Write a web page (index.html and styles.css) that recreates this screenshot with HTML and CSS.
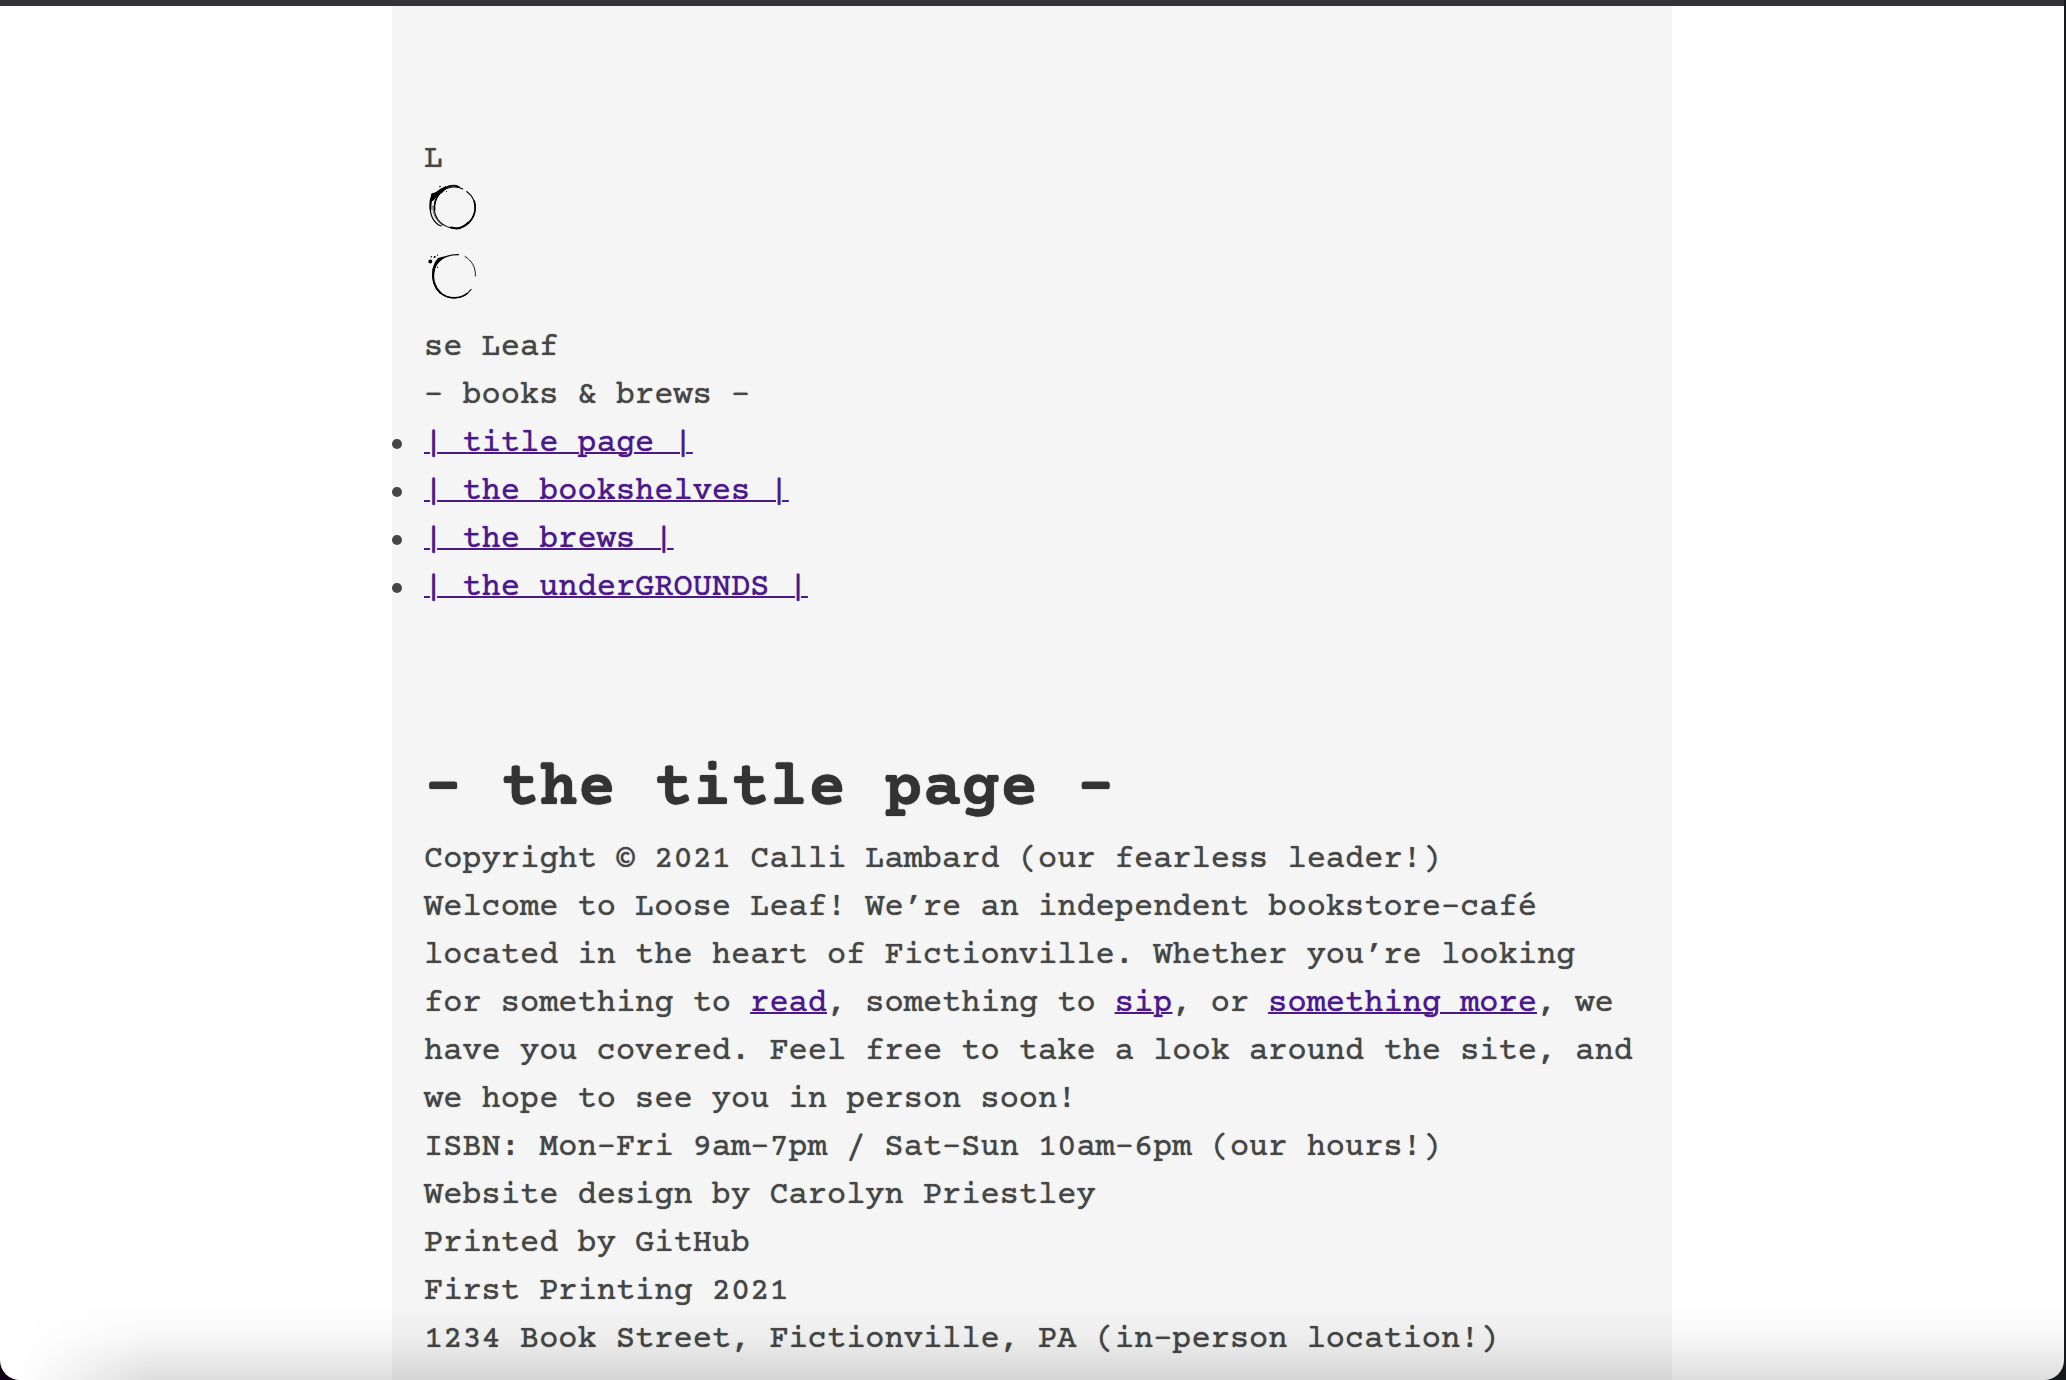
FILE: index.html
```html
<!DOCTYPE html>
<html lang="en">
<head>
<meta charset="utf-8">
<title>Loose Leaf - books &amp; brews</title>
<meta name="viewport" content="width=device-width, initial-scale=1">
<link rel="stylesheet" href="styles.css">
</head>
<body>
<div class="window">
  <div class="page">
    <header class="site-header">
      <div>L</div>
      <svg class="ring" viewBox="0 0 64 70" role="img" aria-label="o">
        <g fill="none" stroke="#000" stroke-linecap="round">
          <path d="M42.700 7.500C49 12 51.500 19 51.200 24C50.500 36 42 44.300 31 44.300C19 44 10.300 35 10.300 24C10.300 14 17 5 27 3.300C32 2.600 36 3.500 38.700 5" stroke-width="1.100"/>
          <path d="M50.300 17C52.500 26 50 34 44 39.500" stroke-width="1.600"/>
          <path d="M44.500 38.500C41 42 37 44 32.500 44.600L27 43.600" stroke-width="2"/>
          <path d="M17 42C9 39 5.500 30 6.500 21C7 16 8 13 10 10" stroke-width="1.200"/>
          <path d="M6.500 25C6 19 7 13 9 10" stroke-width="2"/>
          <path d="M19 41.500C12 37 8.500 30 8.800 22" stroke-width=".6"/>
          <path d="M10.600 26C10 20 12 14 15 10" stroke-width="1.600"/>
          <path d="M20 4.500C25 1.500 30 .8 35 3" stroke-width="1.700"/>
        </g>
        <path d="M7 10L12 8L16 5L22 2L22 5L18 9L13 12L10 16L7 18Z"/>
        <circle cx="16" cy="2.500" r=".8"/><circle cx="22.500" cy="7.500" r=".6"/>
      </svg>
      <svg class="ring" viewBox="0 0 64 70" role="img" aria-label="o">
        <g fill="none" stroke="#000" stroke-linecap="round">
          <path d="M47 35.500C43 41 37 44 30.500 44C18 44 9 34 9 22C9 10 18 .5 34.500 .7" stroke-width="1.200"/>
          <path d="M41 2.500C48 6.500 52 14 51.400 22" stroke-width=".9"/>
          <path d="M9.300 15C8 25 10 33 16.500 39" stroke-width="1.900"/>
          <path d="M16 38.500C24 45.500 36 45 43 39.500" stroke-width="1.400"/>
        </g>
        <path d="M8.300 22L9 13L11 8L14 4L22 2L19 4.500L15 8L12 12L10.500 18L9.800 26Z"/>
        <circle cx="6.300" cy="7.500" r="1.900"/><circle cx="10.700" cy="3" r="1.100"/>
        <circle cx="7.300" cy="2.800" r=".7"/><circle cx="13.500" cy="1.200" r=".6"/>
        <circle cx="13.500" cy="13.300" r=".7"/>
      </svg>
      <div>se Leaf</div>
      <div>- books &amp; brews -</div>
      <nav>
        <ul class="menu">
          <li><a href="#title-page">| title page |</a></li>
          <li><a href="#bookshelves">| the bookshelves |</a></li>
          <li><a href="#brews">| the brews |</a></li>
          <li><a href="#undergrounds">| the underGROUNDS |</a></li>
        </ul>
      </nav>
    </header>
    <main id="title-page">
      <h1>- the title page -</h1>
      <p>Copyright © 2021 Calli Lambard (our fearless leader!)</p>
      <p>Welcome to Loose Leaf! We’re an independent bookstore-café located in the heart of Fictionville. Whether you’re looking for something to <a href="#bookshelves">read</a>, something to <a href="#brews">sip</a>, or <a href="#undergrounds">something more</a>, we have you covered. Feel free to take a look around the site, and we hope to see you in person soon!</p>
      <p>ISBN: Mon-Fri 9am-7pm / Sat-Sun 10am-6pm (our hours!)</p>
      <p>Website design by Carolyn Priestley</p>
      <p>Printed by GitHub</p>
      <p>First Printing 2021</p>
      <p>1234 Book Street, Fictionville, PA (in-person location!)</p>
    </main>
  </div>
  <div class="shade"></div>
</div>
</body>
</html>
```
FILE: styles.css
```css
* {
  box-sizing: border-box;
  margin: 0;
  padding: 0;
}

html {
  background: linear-gradient(90deg, #12001a 50%, #17181c 50%);
}

body {
  color: #464646;
  font-family: "Courier Prime", "Liberation Mono", monospace;
  font-size: 32px;
  line-height: 48px;
  text-shadow: 0 0 1px currentColor;
}

.window {
  position: relative;
  min-height: 100vh;
  display: flex;
  justify-content: center;
  margin-right: 2px;
  overflow: hidden;
  background: #fff;
  border-top: 6px solid #333438;
  border-radius: 0 0 20px 20px;
}

.window::before {
  content: "";
  position: absolute;
  top: -2px;
  left: 0;
  right: 0;
  height: 2px;
  background: #211a1e;
}

.page {
  width: 100%;
  max-width: 1280px;
  padding: 0 32px;
  background: #f5f5f5;
}

.site-header {
  padding: 130px 0 132px;
}

.ring {
  display: block;
  width: 64px;
  height: 70px;
  overflow: visible;
}

.menu {
  list-style: none;
}

.menu li {
  display: flex;
  align-items: center;
}

/* round bullets hanging in the page padding */
.menu li::before {
  content: "";
  width: 10px;
  height: 10px;
  margin: 0 22px 0 -32px;
  border-radius: 50%;
  background: currentColor;
}

a {
  color: #4c1a86;
  text-decoration: underline;
  text-decoration-thickness: 2px;
}

h1 {
  color: #333;
  font-size: 64px;
  line-height: 92px;
}

/* soft shadow rising from the bottom edge of the window */
.shade {
  position: absolute;
  left: 0;
  right: 0;
  bottom: 0;
  height: 76px;
  pointer-events: none;
  background: linear-gradient(rgba(0, 0, 0, 0), rgba(0, 0, 0, .03) 45%, rgba(0, 0, 0, .13));
  -webkit-mask-image: linear-gradient(90deg, transparent 20px, #000 150px);
  mask-image: linear-gradient(90deg, transparent 20px, #000 150px);
}
```
